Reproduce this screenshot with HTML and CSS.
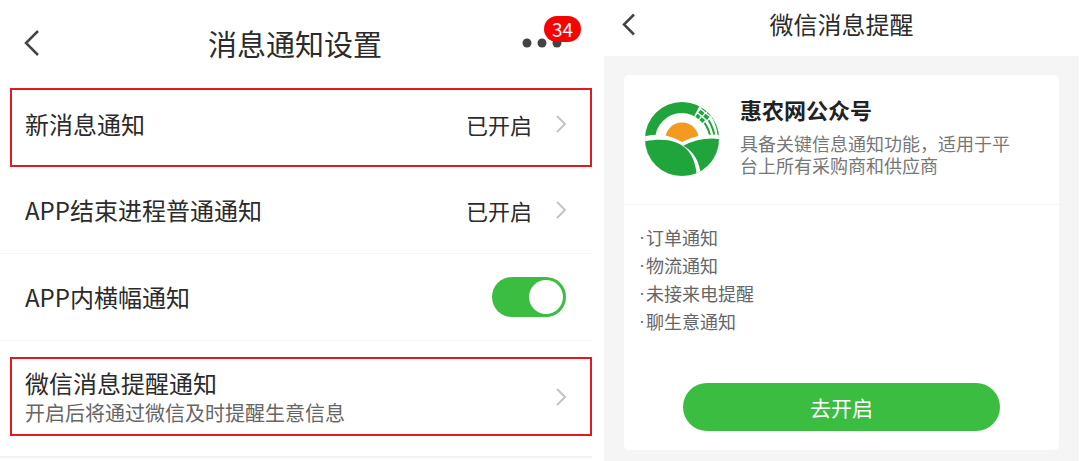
FILE: index.html
```
<!DOCTYPE html>
<html lang="zh-CN">
	<head>
		<meta charset="UTF-8" />
		<meta name="viewport" content="width=device-width, initial-scale=1.0" />
		<title>消息通知设置</title>
		<link rel="stylesheet" href="styles.css">
	</head>
	<body>
		<main class="screens">
			<section class="settings">
				<header class="bar">
					<button class="back" type="button" aria-label="返回">
						<svg width="16" height="28" viewBox="0 0 16 28">
							<path d="M14 2 2 14l12 12" />
						</svg>
					</button>
					<h1 class="bar-title">消息通知设置</h1>
					<button class="more" type="button" aria-label="更多">
						<svg width="40" height="10" viewBox="0 0 40 10">
							<circle cx="5" cy="5" r="4.5" />
							<circle cx="20" cy="5" r="4.5" />
							<circle cx="35" cy="5" r="4.5" />
						</svg>
						<span class="badge">34</span>
					</button>
				</header>
				<a class="row row-marked row-new" href="#new">
					<span class="label">新消息通知</span>
					<span class="status">已开启</span>
					<svg class="arrow" width="10" height="18" viewBox="0 0 10 18">
						<path d="m1 1 8 8-8 8" />
					</svg>
				</a>
				<a class="row" href="#process">
					<span class="label">APP结束进程普通通知</span>
					<span class="status">已开启</span>
					<svg class="arrow" width="10" height="18" viewBox="0 0 10 18">
						<path d="m1 1 8 8-8 8" />
					</svg>
				</a>
				<div class="row">
					<label class="label" for="banner">APP内横幅通知</label>
					<input class="switch" id="banner" type="checkbox" checked />
				</div>
				<div class="last">
					<a class="row row-marked" href="#wechat">
						<span class="label">
							微信消息提醒通知
							<small class="hint">开启后将通过微信及时提醒生意信息</small>
						</span>
						<svg class="arrow" width="10" height="18" viewBox="0 0 10 18">
							<path d="m1 1 8 8-8 8" />
						</svg>
					</a>
				</div>
			</section>

			<section class="wechat">
				<header class="bar bar-small">
					<button class="back" type="button" aria-label="返回">
						<svg width="13" height="23" viewBox="0 0 13 23">
							<path d="M12 1.5 2 11.5l10 10" />
						</svg>
					</button>
					<h2 class="bar-title">微信消息提醒</h2>
				</header>
				<div class="card">
					<div class="account">
						<svg class="logo" viewBox="0 0 220 220">
							<defs>
								<clipPath id="disc">
									<circle cx="110" cy="110" r="110" />
								</clipPath>
							</defs>
							<g clip-path="url(#disc)">
								<rect class="green" width="220" height="220" />
								<circle class="white" cx="109" cy="112" r="79" />
								<!-- 右上角的田格 -->
								<path class="white" d="M146 42 164 8l56 10v92h-38z" />
								<g class="fields">
									<path d="M153 39 175 58" stroke-dasharray="12 4 13" />
									<path d="M162 27 188 49" stroke-dasharray="15 4 15" />
									<path d="M171 15 201 40" stroke-dasharray="17 4 18" />
								</g>
								<g class="furrows">
									<path d="M177 62q14 20 18 46" />
									<path d="M189 54q15 24 19 54" />
									<path d="M202 45q14 24 18 62" />
								</g>
								<circle class="orange" cx="110" cy="111" r="50" />
								<path class="white" d="M-2 102Q60 88 112 117 165 92 222 98V222H-2z" />
								<path class="orange" d="M66 100h88q-24 6-44 19-20-13-44-19z" />
								<path class="green" d="M-2 117C92 99 148 130 154 222H-2z" />
								<path class="green" d="M114 130Q165 103 222 110V222h-56Q162 157 114 130z" />
							</g>
						</svg>
						<div class="account-text">
							<h3 class="account-name">惠农网公众号</h3>
							<p class="account-desc">具备关键信息通知功能，适用于平台上所有采购商和供应商</p>
						</div>
					</div>
					<ul class="notices">
						<li>订单通知</li>
						<li>物流通知</li>
						<li>未接来电提醒</li>
						<li>聊生意通知</li>
					</ul>
					<button class="open" type="button">去开启</button>
				</div>
			</section>
		</main>
	</body>
</html>
```
FILE: styles.css
```
* {
	box-sizing: border-box;
}
body {
	margin: 0;
	background: #fff;
	color: #2b2b2b;
	font-family: "Noto Sans CJK SC", sans-serif;
}
h1,
h2,
h3,
p,
ul {
	margin: 0;
	padding: 0;
}
button {
	padding: 0;
	border: 0;
	background: none;
	font-family: inherit;
}
svg {
	display: block;
}
.screens {
	display: grid;
	grid-template-columns: 592fr 475fr;
	gap: 12px;
	min-height: 100vh;
	padding-right: 1px;
}

/* 顶部栏 */
.bar {
	display: grid;
	grid-template-columns: 48px 1fr 64px;
	align-items: center;
	height: 88px;
	padding: 0 6px 2px 24px;
	background: #fff;
}
.bar-title {
	padding-right: 4px;
	font-size: 29px;
	font-weight: 400;
	line-height: 40px;
	text-align: center;
}
.back {
	justify-self: start;
}
.back path {
	fill: none;
	stroke: #444;
	stroke-width: 2.5;
}
.bar-small {
	grid-template-columns: 64px 1fr 64px;
	height: 56px;
	padding: 0 18px 8px;
}
.bar-small .bar-title {
	padding: 0;
	font-size: 24px;
	line-height: 32px;
}
.more {
	position: relative;
	justify-self: start;
}
.more circle {
	fill: #444;
}
.badge {
	position: absolute;
	left: 22px;
	bottom: 6px;
	width: 37px;
	border-radius: 13px;
	background: #f60404;
	color: #fff;
	font-size: 19px;
	line-height: 26px;
	text-align: center;
}

/* 设置列表 */
.row {
	display: flex;
	align-items: center;
	height: 87px;
	padding: 0 26px 0 25px;
	border-bottom: 1px solid #f5f5f5;
	color: inherit;
	text-decoration: none;
}
.row-marked {
	height: 79px;
	margin-left: 10px;
	padding: 0 24px 0 13px;
	border: 2px solid #e01a20;
}
.row-new {
	padding-bottom: 7px;
}
.label {
	flex: 1;
	font-size: 24px;
	line-height: 32px;
}
.status {
	margin-right: 24px;
	font-size: 22px;
	line-height: 32px;
}
.hint {
	display: block;
	color: #666;
	font-size: 20px;
	line-height: 28px;
}
.arrow path {
	fill: none;
	stroke: #c4c4c4;
	stroke-width: 2;
}
.switch {
	width: 74px;
	height: 40px;
	margin: 0;
	padding: 3px;
	border-radius: 20px;
	background: #ccc;
	appearance: none;
}
.switch::before {
	content: "";
	display: block;
	width: 34px;
	height: 34px;
	border-radius: 50%;
	background: #fff;
}
.switch:checked {
	background: #3bbd41;
}
.switch:checked::before {
	margin-left: auto;
}
.last {
	padding: 16px 0 20px;
	border-bottom: 2px solid #f1f1f1;
}

/* 微信提醒 */
.wechat {
	background: #f5f5f5;
}
.card {
	margin: 19px 20px 12px;
	padding-bottom: 19px;
	border-radius: 5px;
	background: #fff;
}
.account {
	display: flex;
	gap: 21px;
	height: 130px;
	padding: 18px 32px 0 21px;
	border-bottom: 1px solid #f5f5f5;
}
.logo {
	flex: none;
	width: 74px;
	height: 74px;
	margin-top: 9px;
}
.green {
	fill: #1fa53b;
}
.orange {
	fill: #f39a20;
}
.white {
	fill: #fff;
}
.fields,
.furrows {
	fill: none;
	stroke: #1fa53b;
	stroke-width: 11;
}
.furrows {
	stroke-width: 6;
}
.account-name {
	color: #222;
	font-size: 22px;
	font-weight: 700;
	line-height: 32px;
}
.account-desc {
	margin-top: 7px;
	color: #777;
	font-size: 18px;
	line-height: 22px;
}
.notices {
	padding: 18px 15px 0;
	color: #666;
	font-size: 18px;
	line-height: 28px;
	list-style: none;
}
.notices li {
	display: flex;
}
.notices li::before {
	content: "·";
	margin-right: 1px;
	font-family: "Liberation Sans", sans-serif;
}
.open {
	display: block;
	width: 73%;
	height: 48px;
	margin: 48px auto 0;
	border-radius: 24px;
	background: #3bbd41;
	color: #fff;
	font-size: 21px;
}
```
